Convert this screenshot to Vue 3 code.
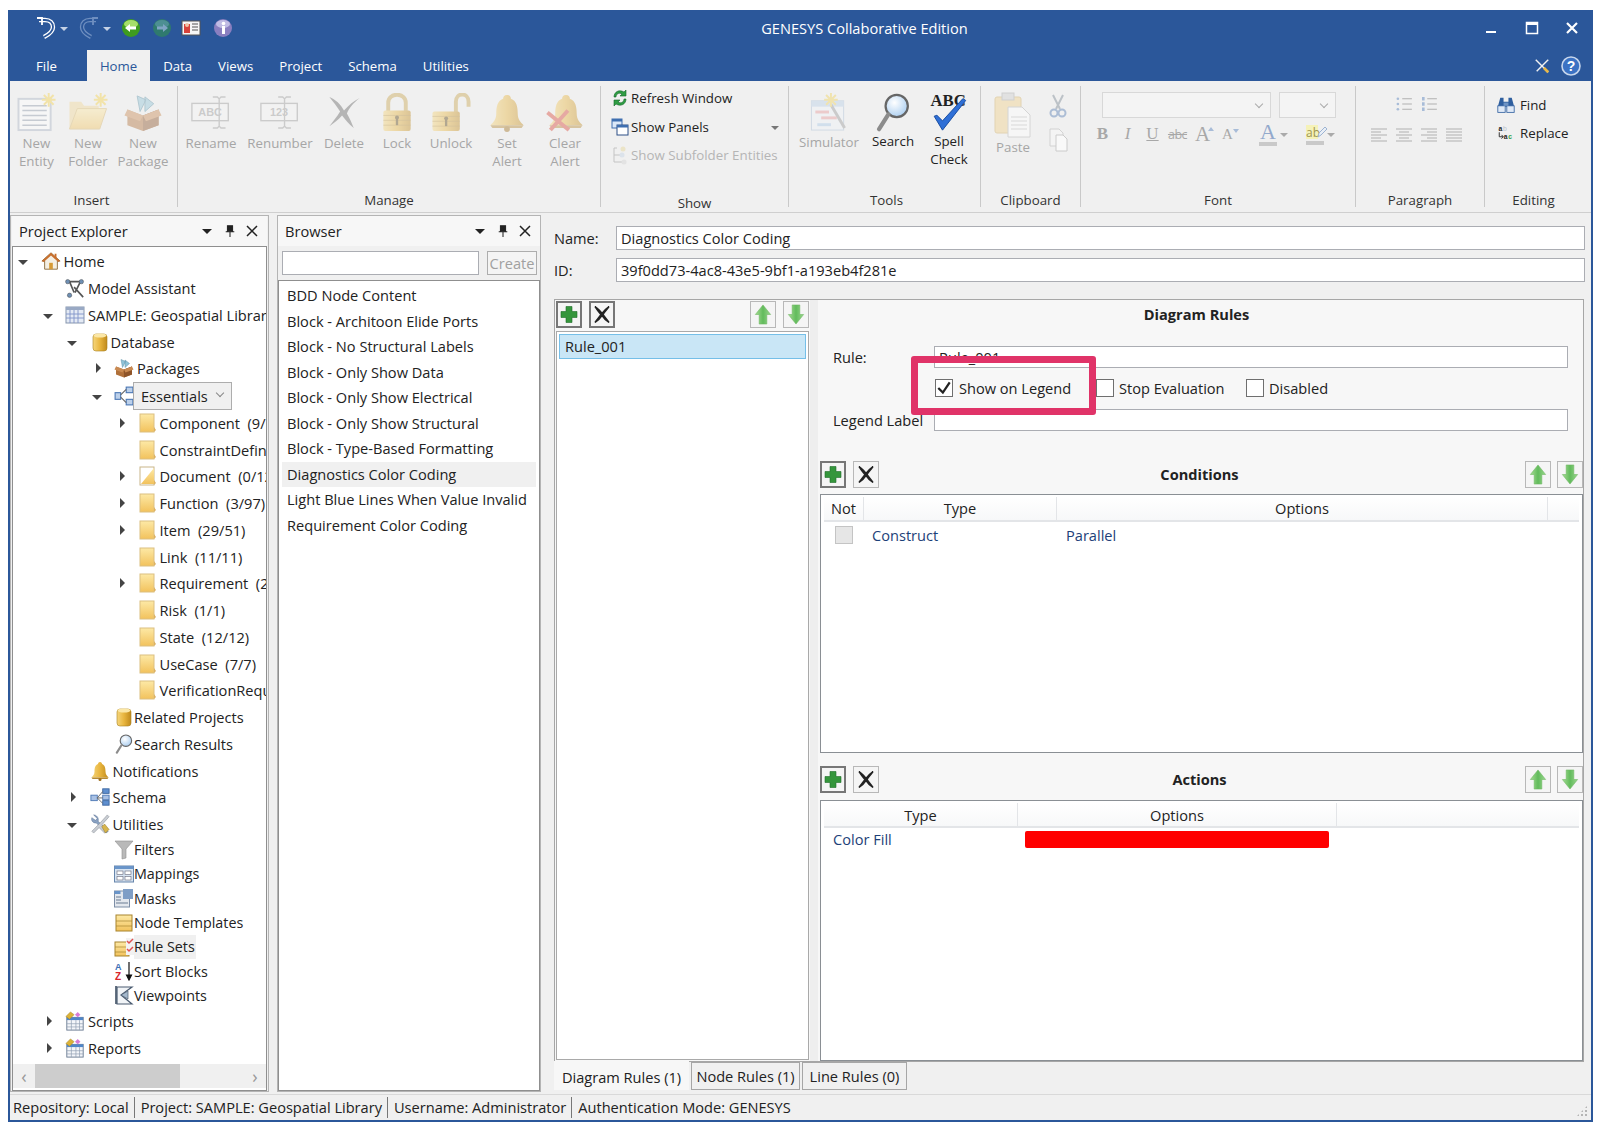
<script setup>
const tabs = ["File", "Home", "Data", "Views", "Project", "Schema", "Utilities"];

const insertBtns = [
  { icon: "newentity", lines: ["New", "Entity"], w: 53 },
  { icon: "newfolder", lines: ["New", "Folder"], w: 50 },
  { icon: "package", lines: ["New", "Package"], w: 60 },
];
const manageBtns = [
  { icon: "rename", lines: ["Rename"], w: 56 },
  { icon: "renumber", lines: ["Renumber"], w: 82 },
  { icon: "delete", lines: ["Delete"], w: 46 },
  { icon: "lock", lines: ["Lock"], w: 60 },
  { icon: "unlock", lines: ["Unlock"], w: 48 },
  { icon: "bell", lines: ["Set", "Alert"], w: 64 },
  { icon: "clearalert", lines: ["Clear", "Alert"], w: 52 },
];
const toolBtns = [
  { icon: "simulator", lines: ["Simulator"], w: 72, off: true },
  { icon: "search", lines: ["Search"], w: 56 },
  { icon: "spell", lines: ["Spell", "Check"], w: 56 },
];

const tree = [
  { d: 0, a: "open", i: "home", t: "Home" },
  { d: 1, i: "assistant", t: "Model Assistant" },
  { d: 1, a: "open", i: "table", t: "SAMPLE: Geospatial Library" },
  { d: 2, a: "open", i: "db", t: "Database", m: true },
  { d: 3, a: "closed", i: "package", t: "Packages" },
  { d: 3, a: "open", i: "hier", t: "Essentials", box: true },
  { d: 4, a: "closed", i: "folder", t: "Component  (9/14)", f: true },
  { d: 4, i: "folder", t: "ConstraintDefinition", f: true },
  { d: 4, a: "closed", i: "folderhalf", t: "Document  (0/12)", f: true },
  { d: 4, a: "closed", i: "folder", t: "Function  (3/97)", f: true },
  { d: 4, a: "closed", i: "folder", t: "Item  (29/51)", f: true },
  { d: 4, i: "folder", t: "Link  (11/11)", f: true },
  { d: 4, a: "closed", i: "folder", t: "Requirement  (24/24)", f: true },
  { d: 4, i: "folder", t: "Risk  (1/1)", f: true },
  { d: 4, i: "folder", t: "State  (12/12)", f: true },
  { d: 4, i: "folder", t: "UseCase  (7/7)", f: true },
  { d: 4, i: "folder", t: "VerificationRequirement", f: true },
  { d: 3, i: "db", t: "Related Projects", tight: true },
  { d: 3, i: "search", t: "Search Results", tight: true },
  { d: 2, i: "bell", t: "Notifications" },
  { d: 2, a: "closed", i: "schema", t: "Schema" },
  { d: 2, a: "open", i: "tools", t: "Utilities" },
  { d: 3, i: "filter", t: "Filters", tight: true, s: true },
  { d: 3, i: "mappings", t: "Mappings", tight: true, s: true },
  { d: 3, i: "masks", t: "Masks", tight: true, s: true },
  { d: 3, i: "nodetpl", t: "Node Templates", tight: true, s: true },
  { d: 3, i: "rulesets", t: "Rule Sets", tight: true, s: true, hl: true },
  { d: 3, i: "sort", t: "Sort Blocks", tight: true, s: true },
  { d: 3, i: "viewpoints", t: "Viewpoints", tight: true, s: true },
  { d: 1, a: "closed", i: "scripts", t: "Scripts" },
  { d: 1, a: "closed", i: "scripts", t: "Reports" },
];

const browserItems = [
  "BDD Node Content",
  "Block - Architoon Elide Ports",
  "Block - No Structural Labels",
  "Block - Only Show Data",
  "Block - Only Show Electrical",
  "Block - Only Show Structural",
  "Block - Type-Based Formatting",
  "Diagnostics Color Coding",
  "Light Blue Lines When Value Invalid",
  "Requirement Color Coding",
];
</script>

<template>
  <div class="app">
    <svg class="sprite" xmlns="http://www.w3.org/2000/svg">
      <defs>
        <linearGradient id="gFold" x1="0" y1="0" x2="0" y2="1"><stop offset="0" stop-color="#fde9a6" /><stop offset="1" stop-color="#f2c25c" /></linearGradient>
        <linearGradient id="gGold" x1="0" y1="0" x2="1" y2="0"><stop offset="0" stop-color="#f6d67c" /><stop offset=".5" stop-color="#e8b53e" /><stop offset="1" stop-color="#c08a1c" /></linearGradient>
        <linearGradient id="gGreen" x1="0" y1="0" x2="1" y2="0"><stop offset="0" stop-color="#a6dd93" /><stop offset=".5" stop-color="#62bb5c" /><stop offset="1" stop-color="#9ad78d" /></linearGradient>
        <radialGradient id="gLens" cx=".4" cy=".35" r=".7"><stop offset="0" stop-color="#ffffff" /><stop offset="1" stop-color="#a9cdf0" /></radialGradient>
      </defs>
      <symbol id="newentity" viewBox="0 0 40 40"><rect x="1" y="6" width="33" height="32" fill="#fff" stroke="#a9b4c4" stroke-width="2" /><path d="M5 13h25M5 18h25M5 23h25M5 28h25M5 33h25" stroke="#8d99ab" stroke-width="1.5" /><path d="M32 0v14M25 7h14M27 2l10 10M37 2L27 12" stroke="#f6d24a" stroke-width="2" /></symbol>
      <symbol id="newfolder" viewBox="0 0 40 40"><path d="M1 9h12l3 4h15v24H1z" fill="#f0d898" /><path d="M9 16h30l-7 21H1z" fill="url(#gFold)" stroke="#d8b668" /><path d="M33 0v14M26 7h14M28 2l10 10M38 2L28 12" stroke="#f6d24a" stroke-width="2" /></symbol>
      <symbol id="package" viewBox="0 0 40 40"><path d="M14 3l9 4-6 12zM22 4l9 7-9 8z" fill="#8fc3d8" stroke="#5f93a8" /><path d="M4 17l16 6 16-6v16l-16 6-16-6z" fill="#b0703a" /><path d="M20 23v16l16-6V17z" fill="#8e5429" /><path d="M4 17l-3 6 16 6 3-6zM36 17l3 6-16 6-3-6z" fill="#c98a52" /></symbol>
      <symbol id="rename" viewBox="0 0 44 40"><rect x="1" y="10" width="40" height="19" fill="#f7f7f7" stroke="#999" stroke-width="1.5" /><text x="21" y="24" text-anchor="middle" font-family="Liberation Sans, sans-serif" font-size="12" font-weight="700" fill="#999">ABC</text><path d="M24 3h5l2 2 2-2h5M31 5v30M24 37h5l2-2 2 2h5" stroke="#999" stroke-width="1.5" fill="none" /></symbol>
      <symbol id="renumber" viewBox="0 0 44 40"><rect x="1" y="10" width="40" height="19" fill="#f7f7f7" stroke="#999" stroke-width="1.5" /><text x="21" y="24" text-anchor="middle" font-family="Liberation Sans, sans-serif" font-size="12" font-weight="700" fill="#999">123</text><path d="M20 3h5l2 2 2-2h5M27 5v30M20 37h5l2-2 2 2h5" stroke="#999" stroke-width="1.5" fill="none" /></symbol>
      <symbol id="delete" viewBox="0 0 36 40"><path d="M3 4c6 2 12 8 15 14 5-6 10-10 16-13-6 5-11 10-13 16 3 5 5 10 7 15-5-4-9-9-12-13-4 5-9 8-13 11 4-5 8-10 11-15C11 14 7 9 3 4z" fill="#666" /></symbol>
      <symbol id="lock" viewBox="0 0 32 40"><path d="M7 19v-9c0-11 18-11 18 0v9" fill="none" stroke="#c9a64f" stroke-width="4" /><rect x="2" y="18" width="28" height="21" rx="2" fill="url(#gGold)" /><path d="M2 23h28M2 28h28M2 33h28" stroke="#a9802b" stroke-width=".6" /><path d="M16 24v9" stroke="#5c4310" stroke-width="2.4" /><circle cx="16" cy="25" r="2" fill="#5c4310" /></symbol>
      <symbol id="unlock" viewBox="0 0 40 40"><path d="M25 20V9c0-10 13-10 13 0v5" fill="none" stroke="#c9a64f" stroke-width="4" /><rect x="1" y="19" width="28" height="20" rx="2" fill="url(#gGold)" /><path d="M1 24h28M1 29h28M1 34h28" stroke="#a9802b" stroke-width=".6" /><path d="M15 25v9" stroke="#5c4310" stroke-width="2.4" /><circle cx="15" cy="26" r="2" fill="#5c4310" /></symbol>
      <symbol id="bell" viewBox="0 0 36 40"><path d="M18 2c3 0 4 2 4 4 6 2 7 9 7 15 0 6 3 9 6 12H1c3-3 6-6 6-12 0-6 1-13 7-15 0-2 1-4 4-4z" fill="url(#gGold)" /><path d="M1 33h34l-2 3H3z" fill="#b58a33" /><circle cx="18" cy="37" r="3" fill="#a0701e" /></symbol>
      <symbol id="clearalert" viewBox="0 0 38 40"><path d="M20 2c3 0 4 2 4 4 6 2 7 9 7 15 0 6 3 9 6 12H3c3-3 6-6 6-12 0-6 1-13 7-15 0-2 1-4 4-4z" fill="url(#gGold)" /><path d="M3 33h34l-2 3H5z" fill="#b58a33" /><path d="M1 20l22 18M22 18L4 38" stroke="#d94a3a" stroke-width="4" /></symbol>
      <symbol id="refresh" viewBox="0 0 18 20"><path d="M3 9C3 4 8 1 13 4l2-2v6H9l2-2C8 4 5 6 5 9z" fill="#2f9e44" stroke="#14672a" stroke-width=".6" /><path d="M15 11c0 5-5 8-10 5l-2 2v-6h6l-2 2c3 2 6 0 6-3z" fill="#2f9e44" stroke="#14672a" stroke-width=".6" /></symbol>
      <symbol id="panels" viewBox="0 0 18 18"><rect x="1" y="1" width="10" height="9" fill="#dbe8f8" stroke="#3f6fb0" /><rect x="1" y="1" width="10" height="2.5" fill="#3f6fb0" /><rect x="6" y="7" width="11" height="10" fill="#fff" stroke="#2c4f86" /><rect x="6" y="7" width="11" height="2.5" fill="#3f6fb0" /></symbol>
      <symbol id="subfolder" viewBox="0 0 18 20"><path d="M3 3h3M3 3v14M3 10h6M3 17h8" stroke="#9a9a9a" fill="none" /><circle cx="12" cy="4" r="2.5" fill="#e8d9a0" /><circle cx="11" cy="10" r="2.5" fill="#c9d8e8" /><circle cx="13" cy="17" r="2.5" fill="#d8d8d8" /></symbol>
      <symbol id="simulator" viewBox="0 0 40 40"><rect x="2" y="8" width="33" height="30" fill="#eef3f9" stroke="#a8bdd4" /><rect x="2" y="8" width="33" height="6" fill="#b9d0e8" /><rect x="6" y="18" width="14" height="3" fill="#e89a9a" /><rect x="12" y="24" width="16" height="3" fill="#e89a9a" /><rect x="8" y="31" width="14" height="3" fill="#a8c8e8" /><path d="M22 12l14 24" stroke="#999" stroke-width="3" /><path d="M22 0v14M15 7h14M17 2l10 10M27 2L17 12" stroke="#f2d256" stroke-width="2" /></symbol>
      <symbol id="search" viewBox="0 0 36 42"><circle cx="22" cy="14" r="12" fill="url(#gLens)" stroke="#666" stroke-width="2.4" /><path d="M13 23L3 39" stroke="#8c8c8c" stroke-width="4.5" stroke-linecap="round" /></symbol>
      <symbol id="spell" viewBox="0 0 42 42"><text x="20" y="14" text-anchor="middle" font-family="Liberation Serif, serif" font-size="18" font-weight="700" fill="#222">ABC</text><path d="M5 25l9 15L39 8l-3-2-22 24-6-6z" fill="#2f6fd6" stroke="#174b9e" stroke-width="1" /></symbol>
      <symbol id="paste" viewBox="0 0 38 46"><rect x="1" y="5" width="26" height="36" rx="2" fill="#f2d391" stroke="#d2b26b" /><rect x="8" y="1" width="12" height="7" fill="#cfcfcf" stroke="#aaa" /><path d="M14 15h14l8 8v22H14z" fill="#fff" stroke="#b4b4b4" /><path d="M17 25h16M17 29h16M17 33h16M17 37h16" stroke="#bdbdbd" /></symbol>
      <symbol id="cut" viewBox="0 0 20 24"><path d="M5 1l7 14M15 1L8 15" stroke="#9aa4ad" stroke-width="2" /><circle cx="6" cy="19" r="3.5" fill="none" stroke="#7f9cc4" stroke-width="2" /><circle cx="14" cy="19" r="3.5" fill="none" stroke="#7f9cc4" stroke-width="2" /></symbol>
      <symbol id="copy" viewBox="0 0 20 24"><path d="M2 1h9l4 4v13H2z" fill="#f7f7f7" stroke="#c0c0c0" /><path d="M8 7h7l4 4v12H8z" fill="#fff" stroke="#b4b4b4" /></symbol>
      <symbol id="find" viewBox="0 0 22 20"><path d="M4 1h4v5h6V1h4l3 11H1z" fill="#2f5f9f" /><rect x="1" y="11" width="9" height="8" fill="#dfe9f6" stroke="#2f5f9f" /><rect x="12" y="11" width="9" height="8" fill="#dfe9f6" stroke="#2f5f9f" /><rect x="8" y="7" width="6" height="4" fill="#6d93c4" /></symbol>
      <symbol id="replace" viewBox="0 0 24 22"><text x="2" y="8" font-family="Liberation Sans, sans-serif" font-size="9" font-weight="700" fill="#222">a</text><text x="8" y="8" font-family="Liberation Sans, sans-serif" font-size="9" fill="#b9c3cf">b</text><text x="9" y="19" font-family="Liberation Sans, sans-serif" font-size="9" font-weight="700" fill="#222">a</text><text x="15" y="19" font-family="Liberation Sans, sans-serif" font-size="9" font-weight="700" fill="#2f9e44">c</text><path d="M3 10v6h5M6 13.500l2.500 2.500L6 18.500" stroke="#222" stroke-width="1.200" fill="none" /></symbol>
      <symbol id="bul" viewBox="0 0 18 16"><circle cx="2" cy="2" r="1.500" fill="#a8bcd8" /><circle cx="2" cy="8" r="1.500" fill="#a8bcd8" /><circle cx="2" cy="14" r="1.500" fill="#a8bcd8" /><path d="M7 2h11M7 8h11M7 14h11" stroke="#b0b0b0" stroke-width="1.300" /></symbol>
      <symbol id="num" viewBox="0 0 18 16"><rect x="1" y="0" width="3" height="4" fill="#a8bcd8" /><rect x="1" y="6" width="3" height="4" fill="#a8bcd8" /><rect x="1" y="12" width="3" height="4" fill="#a8bcd8" /><path d="M7 2h11M7 8h11M7 14h11" stroke="#b0b0b0" stroke-width="1.300" /></symbol>
      <symbol id="alleft" viewBox="0 0 16 14"><path d="M0 1h16M0 4h10M0 7h16M0 10h10M0 13h16" stroke="#b0b0b0" /></symbol>
      <symbol id="alcenter" viewBox="0 0 16 14"><path d="M0 1h16M3 4h10M0 7h16M3 10h10M0 13h16" stroke="#b0b0b0" /></symbol>
      <symbol id="alright" viewBox="0 0 16 14"><path d="M0 1h16M6 4h10M0 7h16M6 10h10M0 13h16" stroke="#b0b0b0" /></symbol>
      <symbol id="aljust" viewBox="0 0 16 14"><path d="M0 1h16M0 4h16M0 7h16M0 10h16M0 13h16" stroke="#b0b0b0" /></symbol>
      <symbol id="home" viewBox="0 0 22 20"><path d="M11 1L1 10h3v9h14v-9h3z" fill="#f4efe3" stroke="#8a6a3a" /><path d="M11 1L1 10l2 1 8-7 8 7 2-1z" fill="#c96f2d" /><rect x="9" y="12" width="4" height="7" fill="#d69a35" /><rect x="15" y="2" width="2" height="5" fill="#c96f2d" /></symbol>
      <symbol id="assistant" viewBox="0 0 22 22"><path d="M3 4h15M5 4l5 12M17 4l-6 12M10 10l10 11" stroke="#555" stroke-width="1.800" /><circle cx="3" cy="4" r="2.400" fill="#6e8fb3" stroke="#444" stroke-width=".5" /><circle cx="18" cy="4" r="2.400" fill="#6e8fb3" stroke="#444" stroke-width=".5" /><circle cx="5" cy="19" r="2.400" fill="#6e8fb3" stroke="#444" stroke-width=".5" /></symbol>
      <symbol id="table" viewBox="0 0 20 18"><rect x="1" y="1" width="18" height="16" fill="#e4eaf4" stroke="#8695ad" /><rect x="1" y="1" width="18" height="3" fill="#99a9c4" /><path d="M5 4v13M9 4v13M13 4v13M1 8h18M1 12h18" stroke="#7f93c8" stroke-width=".9" /></symbol>
      <symbol id="db" viewBox="0 0 20 20"><rect x="3" y="2" width="14" height="17" rx="3" fill="url(#gGold)" stroke="#a87f1f" stroke-width=".6" /><ellipse cx="10" cy="3.500" rx="6.500" ry="2" fill="#fbe7a6" /></symbol>
      <symbol id="hier" viewBox="0 0 18 18"><rect x="1" y="6" width="5" height="6" fill="#bcd0ea" stroke="#4c78b5" /><rect x="11" y="1" width="6" height="5" fill="#bcd0ea" stroke="#4c78b5" /><rect x="11" y="12" width="6" height="5" fill="#bcd0ea" stroke="#4c78b5" /><path d="M6 8l5-5M6 10l5 5" stroke="#666" /></symbol>
      <symbol id="schema" viewBox="0 0 22 20"><rect x="1" y="8" width="7" height="6" fill="#a9c1e4" stroke="#4c78b5" /><rect x="14" y="1" width="7" height="5" fill="#5f8fcf" stroke="#3b66a0" /><rect x="14" y="8" width="7" height="5" fill="#a9c1e4" stroke="#4c78b5" /><rect x="14" y="14" width="7" height="5" fill="#5f8fcf" stroke="#3b66a0" /><path d="M8 11l6-7M8 11h6M8 11l6 6" stroke="#666" /></symbol>
      <symbol id="folder" viewBox="0 0 18 20"><rect x="1" y="1" width="14" height="18" fill="url(#gFold)" stroke="#dcbf80" /><path d="M15 14l2 3-2 2z" fill="#dcb264" /></symbol>
      <symbol id="folderhalf" viewBox="0 0 18 20"><rect x="1" y="1" width="14" height="18" fill="#fff" stroke="#c9b68a" /><path d="M15 2v16H2z" fill="url(#gFold)" /><path d="M15 14l2 3-2 2z" fill="#dcb264" /></symbol>
      <symbol id="tools" viewBox="0 0 22 22"><path d="M4 1l4 4-2 2-4-3c-1 3 1 6 5 6l11 11 2-2L9 8c1-4-2-7-5-7z" fill="#8aa2c2" stroke="#50698c" stroke-width=".5" /><path d="M19 1l2 2-8 9 6 6-3 3-6-6-6 6-2-2 9-9z" fill="#c9cdd3" stroke="#7a8088" stroke-width=".5" /><path d="M13 14l3-3 5 6-4 4z" fill="#d8b54c" stroke="#8a7020" stroke-width=".5" /></symbol>
      <symbol id="filter" viewBox="0 0 20 20"><path d="M1 1h18l-7 8v9l-4 1V9z" fill="#b9b9b9" stroke="#8f8f8f" stroke-width=".6" /></symbol>
      <symbol id="mappings" viewBox="0 0 20 20"><rect x=".5" y="2" width="19" height="16" fill="#d7e4f2" stroke="#6685ab" /><rect x=".5" y="2" width="19" height="3" fill="#6a95c9" /><rect x="3" y="7" width="6" height="3.500" fill="#fff" stroke="#667" stroke-width=".6" /><rect x="11" y="7" width="6" height="3.500" fill="#fff" stroke="#667" stroke-width=".6" /><rect x="3" y="12.500" width="6" height="3.500" fill="#fff" stroke="#667" stroke-width=".6" /><rect x="11" y="12.500" width="6" height="3.500" fill="#fff" stroke="#667" stroke-width=".6" /></symbol>
      <symbol id="masks" viewBox="0 0 20 20"><rect x=".5" y="3" width="15" height="16" fill="#e4e8ee" stroke="#7d8ea6" /><rect x=".5" y="3" width="6" height="3" fill="#6a95c9" /><rect x="9" y="1" width="10" height="10" fill="#7f9ec6" /><path d="M2 9h5M2 12h5M2 15h12" stroke="#6b7c93" /></symbol>
      <symbol id="nodetpl" viewBox="0 0 20 20"><rect x="2" y="2" width="16" height="16" fill="url(#gFold)" stroke="#a8842f" /><path d="M2 8h16M2 13h16" stroke="#a8842f" stroke-width=".7" /></symbol>
      <symbol id="rulesets" viewBox="0 0 20 20"><rect x="1" y="5" width="14" height="14" fill="url(#gFold)" stroke="#a8842f" /><path d="M1 10h14M1 15h14" stroke="#a8842f" stroke-width=".7" /><rect x="12" y="1" width="8" height="17" fill="#f2f2f2" /><path d="M13 4l2 2 4-4M13 12l2 2 4-4" stroke="#e05050" stroke-width="1.500" fill="none" /></symbol>
      <symbol id="sort" viewBox="0 0 20 20"><text x="1" y="9" font-family="Liberation Sans, sans-serif" font-size="9" font-weight="700" fill="#3b6fb5">A</text><text x="1" y="19" font-family="Liberation Sans, sans-serif" font-size="10" font-weight="700" fill="#d9252b">Z</text><path d="M15 1v16M12.500 14l2.500 5 2.500-5z" stroke="#111" stroke-width="1.200" fill="#111" /></symbol>
      <symbol id="viewpoints" viewBox="0 0 20 20"><path d="M2 1v18" stroke="#3f4f63" stroke-width="1.600" /><path d="M3 2h15L7 10l11 9H3z" fill="#f1f4f7" stroke="#4a5b70" stroke-width="1.200" /><path d="M7 10l7-4v8z" fill="#a4b8cc" stroke="#4a5b70" stroke-width=".7" /></symbol>
      <symbol id="scripts" viewBox="0 0 22 22"><rect x="2" y="7" width="18" height="14" fill="#f4f6fa" stroke="#67788f" /><rect x="2" y="7" width="18" height="3" fill="#4f86c9" /><path d="M7 10v11M12 10v11M16 10v11M2 14h18M2 17.500h18" stroke="#93a1b4" stroke-width=".8" /><path d="M1 6l5-5 4 3-5 5z" fill="#dcb338" stroke="#9a7a1c" stroke-width=".5" /><path d="M11 4l3-3 3 3-3 3z" fill="#d77ad6" /></symbol>
      <symbol id="plus" viewBox="0 0 20 20"><path d="M7 2h6v5h5v6h-5v5H7v-5H2V7h5z" fill="#35963c" stroke="#1f6d29" stroke-width=".6" /></symbol>
      <symbol id="cross" viewBox="0 0 20 20"><path d="M3 2c4 3 6 5 7 7 2-3 4-5 7-7-2 3-5 6-6 8 2 3 4 5 6 8-3-2-5-4-7-7-2 3-4 5-7 7 2-3 4-5 6-8-2-2-4-5-6-8z" fill="#222" stroke="#222" stroke-width="1.500" /></symbol>
      <symbol id="up" viewBox="0 0 20 22"><path d="M10 1l8 10h-4v10H6V11H2z" fill="url(#gGreen)" stroke="#6eb763" stroke-width=".6" /></symbol>
      <symbol id="down" viewBox="0 0 20 22"><path d="M10 21L2 11h4V1h8v10h4z" fill="url(#gGreen)" stroke="#6eb763" stroke-width=".6" /></symbol>
    </svg>

    <div class="win">
      <header class="titlebar">
        <div class="qat">
          <svg class="q undo" viewBox="0 0 22 24"><path d="M4 4h6c5 0 8 3 8 7 0 5-5 8-9 10" fill="none" stroke="#fff" stroke-width="4.400" /><path d="M4 4h6c5 0 8 3 8 7 0 5-5 8-9 10" fill="none" stroke="#2b579a" stroke-width="1.800" /><path d="M2 2h5v7" fill="none" stroke="#fff" stroke-width="1.800" /></svg>
          <i class="caret"></i>
          <svg class="q redo" viewBox="0 0 22 24"><path d="M18 4h-6C7 4 4 7 4 11c0 5 5 8 9 10" fill="none" stroke="#6f8fc0" stroke-width="4.400" /><path d="M18 4h-6C7 4 4 7 4 11c0 5 5 8 9 10" fill="none" stroke="#2b579a" stroke-width="1.800" /><path d="M20 2h-5v7" fill="none" stroke="#6f8fc0" stroke-width="1.800" /></svg>
          <i class="caret"></i>
          <svg class="q nav back" viewBox="0 0 20 20"><circle cx="10" cy="10" r="9" fill="#3e9c1e" /><ellipse cx="10" cy="6" rx="7" ry="4" fill="#a6de6a" /><path d="M4 10l5-4v2.500h6v3H9V14z" fill="#fff" /></svg>
          <svg class="q nav" viewBox="0 0 20 20"><circle cx="10" cy="10" r="9" fill="#2f7a6e" /><ellipse cx="10" cy="6" rx="7" ry="4" fill="#4d8f93" /><path d="M16 10l-5-4v2.500H5v3h6V14z" fill="#7fa4c4" /></svg>
          <svg class="q nav card" viewBox="0 0 20 16"><rect x="1" y="1" width="18" height="14" fill="#f6f6f6" stroke="#555" /><rect x="3" y="4" width="6" height="9" fill="#d8423a" /><circle cx="6" cy="5" r="2" fill="#f1c3a4" /><path d="M11 4h6M11 7h6M11 10h6" stroke="#555" /></svg>
          <svg class="q nav info" viewBox="0 0 20 20"><circle cx="10" cy="10" r="9" fill="#8a7fc0" /><ellipse cx="10" cy="6" rx="7" ry="4" fill="#c0bce4" /><rect x="9" y="8" width="3" height="8" fill="#fff" /><circle cx="10.500" cy="5.500" r="1.800" fill="#fff" /></svg>
        </div>
        <div class="apptitle">GENESYS Collaborative Edition</div>
        <div class="winctl">
          <svg viewBox="0 0 14 14"><rect x="1" y="10" width="10" height="2" fill="#fff" /></svg>
          <svg viewBox="0 0 14 14"><rect x="1.500" y="1.500" width="11" height="11" fill="none" stroke="#fff" stroke-width="1.500" /><rect x="1" y="1" width="12" height="3" fill="#fff" /></svg>
          <svg viewBox="0 0 14 14"><path d="M2 2l10 10M12 2L2 12" stroke="#fff" stroke-width="2.200" /></svg>
        </div>
      </header>

      <nav class="tabrow">
        <span v-for="t in tabs" :key="t" class="tab" :class="{ on: t === 'Home', file: t === 'File' }">{{ t }}</span>
        <div class="tabright">
          <svg class="wrench" viewBox="0 0 18 18"><path d="M2 2l14 14" stroke="#f2f2f2" stroke-width="1.600" /><path d="M16 2L3 15" stroke="#f2f2f2" stroke-width="1.600" /><path d="M11 11l5 5" stroke="#e9b949" stroke-width="3" /></svg>
          <svg viewBox="0 0 20 20"><circle cx="10" cy="10" r="9" fill="#3b72c4" stroke="#c7d6ec" stroke-width="1.600" /><text x="10" y="15" text-anchor="middle" font-family="Liberation Sans, sans-serif" font-size="14" font-weight="700" fill="#fff">?</text></svg>
        </div>
      </nav>

      <section class="ribbon">
        <div class="rgroup g-insert">
          <div class="rbody">
            <div v-for="b in insertBtns" :key="b.icon" class="lgbtn off" :style="{ width: b.w + 'px' }">
              <svg class="lgicon"><use :href="'#' + b.icon" /></svg>
              <span v-for="l in b.lines" :key="l">{{ l }}</span>
            </div>
          </div>
          <div class="rlabel">Insert</div>
        </div>
        <div class="rgroup g-manage">
          <div class="rbody">
            <div v-for="b in manageBtns" :key="b.icon" class="lgbtn off" :style="{ width: b.w + 'px' }">
              <svg class="lgicon"><use :href="'#' + b.icon" /></svg>
              <span v-for="l in b.lines" :key="l">{{ l }}</span>
            </div>
          </div>
          <div class="rlabel">Manage</div>
        </div>
        <div class="rgroup g-show">
          <div class="rstack">
            <div class="smbtn"><svg><use href="#refresh" /></svg>Refresh Window</div>
            <div class="smbtn"><svg><use href="#panels" /></svg>Show Panels<i class="tri"></i></div>
            <div class="smbtn off"><svg><use href="#subfolder" /></svg>Show Subfolder Entities</div>
          </div>
          <div class="rlabel low">Show</div>
        </div>
        <div class="rgroup g-tools">
          <div class="rbody">
            <div v-for="b in toolBtns" :key="b.icon" class="lgbtn" :class="{ off: b.off }" :style="{ width: b.w + 'px' }">
              <svg class="lgicon"><use :href="'#' + b.icon" /></svg>
              <span v-for="l in b.lines" :key="l">{{ l }}</span>
            </div>
          </div>
          <div class="rlabel">Tools</div>
        </div>
        <div class="rgroup g-clip">
          <div class="rbody clipbody">
            <div class="lgbtn off pastebtn">
              <svg class="pasteicon"><use href="#paste" /></svg>
              <span>Paste</span>
            </div>
            <div class="clipside off">
              <svg><use href="#cut" /></svg>
              <svg><use href="#copy" /></svg>
            </div>
          </div>
          <div class="rlabel">Clipboard</div>
        </div>
        <div class="rgroup g-font">
          <div class="fontbody">
            <div class="combos">
              <div class="combo wide"><i class="chev"></i></div>
              <div class="combo narrow"><i class="chev"></i></div>
            </div>
            <div class="fontrow">
              <b class="fb serif">B</b>
              <em class="fb serif">I</em>
              <u class="fb serif">U</u>
              <s class="fb abc">abc</s>
              <span class="fb big serif">A<i class="up-mark"></i></span>
              <span class="fb mid serif">A<i class="down-mark"></i></span>
              <span class="fb colA serif">A</span><i class="tri t2"></i>
              <span class="fb hlab">ab<svg class="pen" viewBox="0 0 10 12"><path d="M1 11l1-4 6-6 2 2-6 6z" fill="#e8eef6" stroke="#9db4d2" /></svg></span><i class="tri t2"></i>
            </div>
          </div>
          <div class="rlabel">Font</div>
        </div>
        <div class="rgroup g-para">
          <div class="parabody">
            <div class="pararow first">
              <svg class="pi"><use href="#bul" /></svg><svg class="pi"><use href="#num" /></svg>
            </div>
            <div class="pararow">
              <svg class="pi"><use href="#alleft" /></svg><svg class="pi"><use href="#alcenter" /></svg><svg class="pi"><use href="#alright" /></svg><svg class="pi"><use href="#aljust" /></svg>
            </div>
          </div>
          <div class="rlabel">Paragraph</div>
        </div>
        <div class="rgroup g-edit">
          <div class="editbody">
            <div class="smbtn"><svg><use href="#find" /></svg>Find</div>
            <div class="smbtn"><svg><use href="#replace" /></svg>Replace</div>
          </div>
          <div class="rlabel">Editing</div>
        </div>
      </section>

      <main class="content">
        <aside class="panel pe">
          <div class="phead">
            <span>Project Explorer</span>
            <div class="pctl">
              <i class="pdrop"></i>
              <svg viewBox="0 0 12 14"><path d="M3 1h6v7H3zM1 8h10M6 8v6M7 2v5" stroke="#222" stroke-width="1.200" fill="#222" /></svg>
              <svg viewBox="0 0 12 12"><path d="M1 1l10 10M11 1L1 11" stroke="#222" stroke-width="1.500" /></svg>
            </div>
          </div>
          <div class="treebox">
            <div class="treescroll">
              <div
                v-for="n in tree"
                :key="n.t"
                class="node"
                :class="{ small: n.s, ess: n.box }"
                :style="{ paddingLeft: 3 + n.d * 24.5 + 'px' }"
              >
                <span class="arrow"><i v-if="n.a" :class="n.a"></i></span>
                <svg class="nicon" :class="{ fold: n.f, tight: n.tight, near: n.m }"><use :href="'#' + n.i" /></svg>
                <span v-if="n.box" class="essbox">{{ n.t }}<i class="chev dark"></i></span>
                <span v-else class="ntext" :class="{ hl: n.hl }">{{ n.t }}</span>
              </div>
            </div>
            <div class="hscroll">
              <span class="sarrow">‹</span>
              <div class="thumb"></div>
              <span class="sarrow r">›</span>
            </div>
          </div>
        </aside>

        <aside class="panel br">
          <div class="phead">
            <span>Browser</span>
            <div class="pctl">
              <i class="pdrop"></i>
              <svg viewBox="0 0 12 14"><path d="M3 1h6v7H3zM1 8h10M6 8v6M7 2v5" stroke="#222" stroke-width="1.200" fill="#222" /></svg>
              <svg viewBox="0 0 12 12"><path d="M1 1l10 10M11 1L1 11" stroke="#222" stroke-width="1.500" /></svg>
            </div>
          </div>
          <div class="searchrow">
            <div class="input brinput"></div>
            <div class="createbtn">Create</div>
          </div>
          <div class="brlist">
            <div v-for="b in browserItems" :key="b" class="britem" :class="{ sel: b === 'Diagnostics Color Coding' }">{{ b }}</div>
          </div>
        </aside>

        <section class="main">
          <div class="formrow"><label>Name:</label><div class="input">Diagnostics Color Coding</div></div>
          <div class="formrow"><label>ID:</label><div class="input">39f0dd73-4ac8-43e5-9bf1-a193eb4f281e</div></div>

          <div class="rulepanel">
            <div class="leftpane">
              <div class="tools">
                <span class="tbtn dark"><svg><use href="#plus" /></svg></span>
                <span class="tbtn dark"><svg><use href="#cross" /></svg></span>
                <span class="spacer"></span>
                <span class="tbtn"><svg><use href="#up" /></svg></span>
                <span class="tbtn"><svg><use href="#down" /></svg></span>
              </div>
              <div class="rulelist"><div class="ruleitem">Rule_001</div></div>
            </div>
            <div class="splitter"></div>
            <div class="rightpane">
              <h3 class="ptitle">Diagram Rules</h3>
              <div class="fgrid">
                <label>Rule:</label>
                <div class="input tall">Rule_001</div>
              </div>
              <div class="checks">
                <span class="check c1"><i class="box"><svg viewBox="0 0 14 14"><path d="M2 7l4 4 6-9" fill="none" stroke="#222" stroke-width="2" /></svg></i>Show on Legend</span>
                <span class="check c2"><i class="box"></i>Stop Evaluation</span>
                <span class="check c3"><i class="box"></i>Disabled</span>
              </div>
              <div class="fgrid legend">
                <label>Legend Label</label>
                <div class="input tall"></div>
              </div>
              <div class="callout"></div>

              <div class="sect first">
                <div class="sectleft"><span class="tbtn dark"><svg><use href="#plus" /></svg></span><span class="tbtn"><svg><use href="#cross" /></svg></span></div>
                <strong>Conditions</strong>
                <div class="sectright"><span class="tbtn"><svg><use href="#up" /></svg></span><span class="tbtn"><svg><use href="#down" /></svg></span></div>
              </div>
              <div class="gridbox cond">
                <div class="ghead">
                  <span class="c-not">Not</span><span class="c-type">Type</span><span class="c-opt">Options</span><span class="c-rest"></span>
                </div>
                <div class="grow">
                  <span class="c-not"><i class="box grey"></i></span>
                  <span class="c-type link">Construct</span>
                  <span class="c-opt link">Parallel</span>
                </div>
              </div>

              <div class="sect">
                <div class="sectleft"><span class="tbtn dark"><svg><use href="#plus" /></svg></span><span class="tbtn"><svg><use href="#cross" /></svg></span></div>
                <strong>Actions</strong>
                <div class="sectright"><span class="tbtn"><svg><use href="#up" /></svg></span><span class="tbtn"><svg><use href="#down" /></svg></span></div>
              </div>
              <div class="gridbox act">
                <div class="ghead">
                  <span class="a-type">Type</span><span class="a-opt">Options</span><span class="c-rest"></span>
                </div>
                <div class="grow">
                  <span class="a-type link">Color Fill</span>
                  <span class="a-opt"><i class="redbar"></i></span>
                </div>
              </div>
            </div>
          </div>

          <div class="bottomtabs">
            <span class="btab on">Diagram Rules (1)</span>
            <span class="btab nr">Node Rules (1)</span>
            <span class="btab lr">Line Rules (0)</span>
          </div>
        </section>
      </main>

      <footer class="status">
        <span>Repository: Local</span>
        <span>Project: SAMPLE: Geospatial Library</span>
        <span>Username: Administrator</span>
        <span class="last">Authentication Mode: GENESYS</span>
        <i class="grip"></i>
      </footer>
    </div>
  </div>
</template>

<style scoped>
.app {
  width: 1602px;
  height: 1130px;
  box-sizing: border-box;
  padding: 10px 9px 8px 8px;
  background: #fff;
  font-family: "Open Sans", "Noto Sans", sans-serif;
  font-size: 14.6px;
  color: #222;
  overflow: hidden;
  position: relative;
}
.sprite {
  position: absolute;
  width: 0;
  height: 0;
}
.win {
  height: 100%;
  display: flex;
  flex-direction: column;
  border: 2px solid #2b579a;
  border-top: 0;
  box-sizing: border-box;
  background: #f0f0f0;
}

/* title */
.titlebar {
  height: 40px;
  flex: none;
  box-sizing: border-box;
  background: #2b579a;
  color: #fff;
  display: grid;
  grid-template-columns: 1fr auto 1fr;
  align-items: center;
  padding-bottom: 4px;
}
.qat {
  display: flex;
  align-items: center;
  padding-left: 25px;
}
.q {
  width: 20px;
  height: 20px;
}
.undo,
.redo {
  width: 22px;
  height: 24px;
}
.redo {
  margin-left: 10px;
}
.nav {
  margin-left: 11px;
}
.nav.back {
  margin-left: 10px;
}
.nav.card {
  margin-left: 9px;
}
.nav.info {
  margin-left: 12px;
}
.caret {
  width: 0;
  height: 0;
  margin-left: 3px;
  border: 4px solid transparent;
  border-top: 4px solid #c5d2e6;
  margin-top: 5px;
}
.apptitle {
  font-size: 14.6px;
  transform: translateX(64px);
}
.winctl {
  justify-self: end;
  display: flex;
  gap: 26px;
  padding-right: 12px;
}
.winctl svg {
  width: 14px;
  height: 14px;
}

/* tabs */
.tabrow {
  height: 31px;
  flex: none;
  background: #2b579a;
  display: flex;
  align-items: stretch;
  color: #fff;
}
.tab {
  padding: 0 13px;
  line-height: 32px;
  font-size: 13.2px;
}
.tab.file {
  margin-left: 13px;
  margin-right: 17px;
}
.tab.on {
  background: #f0f0f0;
  color: #2b579a;
}
.tabright {
  margin-left: auto;
  display: flex;
  align-items: center;
  gap: 11px;
  padding-right: 10px;
}
.tabright svg {
  width: 20px;
  height: 20px;
}
.tabright .wrench {
  width: 16px;
  height: 16px;
}

/* ribbon */
.ribbon {
  height: 132px;
  flex: none;
  box-sizing: border-box;
  display: flex;
  padding: 5px 0;
  background: #f0f0f0;
  border-bottom: 1px solid #cfcfcf;
  font-size: 13.3px;
}
.rgroup {
  display: flex;
  flex-direction: column;
  box-sizing: border-box;
  border-right: 1px solid #c9c9c9;
  flex: none;
}
.g-insert { width: 168px; padding-right: 4px; }
.g-manage { width: 423px; padding: 0 5px; }
.g-show { width: 188px; padding: 0 10px; }
.g-tools { width: 192px; padding-left: 4px; }
.g-clip { width: 100px; }
.g-font { width: 275px; }
.g-para { width: 129px; }
.g-edit { width: 103px; border-right: 0; padding-right: 6px; }
.rbody {
  display: flex;
  flex: 1;
}
.rlabel {
  text-align: center;
  height: 20px;
  line-height: 20px;
  margin-bottom: -3px;
  color: #333;
}
.rlabel.low {
  transform: translateY(3px);
}
.lgbtn {
  display: flex;
  flex-direction: column;
  align-items: center;
  padding-top: 7px;
  line-height: 18px;
  flex: none;
  color: #222;
}
.lgbtn.off {
  color: #a6a6a6;
}
.lgbtn.off .lgicon {
  opacity: 0.42;
}
.lgicon {
  width: 40px;
  height: 39px;
  margin-bottom: 2px;
}
.g-tools .lgicon {
  margin-bottom: 0;
}
.g-tools .lgbtn.off .lgicon {
  margin-bottom: 1px;
}
.rstack {
  flex: 1;
  display: flex;
  flex-direction: column;
  gap: 4.5px;
}
.smbtn {
  display: flex;
  align-items: center;
  height: 24px;
  white-space: nowrap;
  position: relative;
}
.smbtn svg {
  width: 18px;
  height: 20px;
  margin-right: 2px;
  flex: none;
}
.smbtn.off {
  color: #b5b5b5;
}
.smbtn.off svg {
  opacity: 0.5;
}
.tri {
  width: 0;
  height: 0;
  border: 4px solid transparent;
  border-top: 4px solid #777;
  position: absolute;
  left: 160px;
  top: 11px;
}
.clipbody {
  padding-left: 9px;
  gap: 9px;
}
.pastebtn {
  width: 46px;
  padding-top: 6px;
}
.pasteicon {
  width: 38px;
  height: 46px;
  margin-bottom: 0;
  opacity: 0.45;
}
.clipside {
  display: flex;
  flex-direction: column;
  gap: 10px;
  padding-top: 8px;
  padding-left: 2px;
  opacity: 0.6;
}
.clipside svg {
  width: 22px;
  height: 24px;
}
.fontbody {
  flex: 1;
  padding: 6px 0 0 21px;
}
.combos {
  display: flex;
  gap: 8px;
}
.combo {
  height: 26px;
  box-sizing: border-box;
  background: #f4f4f4;
  border: 1px solid #d8d8d8;
  position: relative;
}
.combo.wide { width: 169px; }
.combo.narrow { width: 57px; }
.chev {
  position: absolute;
  right: 8px;
  top: 8px;
  width: 5px;
  height: 5px;
  border-right: 1px solid #aaa;
  border-bottom: 1px solid #aaa;
  transform: rotate(45deg);
}
.fontrow {
  display: flex;
  align-items: center;
  margin: 4px 0 0 -12px;
  height: 24px;
  color: #a8a8a8;
  position: relative;
}
.fb {
  width: 25px;
  flex: none;
  text-align: center;
  font-size: 14px;
  position: relative;
  text-decoration-thickness: 1px;
}
.serif {
  font-family: "Liberation Serif", serif;
  font-size: 17px;
}
.abc {
  font-size: 12.5px;
  letter-spacing: -0.5px;
}
.big { font-size: 21px; }
.mid { font-size: 15px; }
.up-mark,
.down-mark {
  position: absolute;
  right: 1px;
  width: 0;
  height: 0;
  border: 3px solid transparent;
}
.up-mark {
  top: 2px;
  border-bottom: 4px solid #a8bcd8;
}
.down-mark {
  top: 3px;
  border-top: 4px solid #a8bcd8;
}
.colA {
  width: 18px;
  font-size: 22px;
  line-height: 20px;
  border-bottom: 4px solid #c9c9c9;
  margin-left: 19px;
  color: #93a9cc;
}
.hlab {
  width: 18px;
  font-size: 12px;
  line-height: 17px;
  color: #9f9650;
  background: linear-gradient(#f5f2b8, #f5f2b8) no-repeat 0 1px / 12px 14px;
  border-bottom: 4px solid #c9c9c9;
  margin-left: 18px;
  text-align: left;
}
.pen {
  position: absolute;
  right: -3px;
  top: 2px;
  width: 10px;
  height: 12px;
}
.fontrow .tri.t2 {
  position: static;
  margin: 5px 0 0 3px;
  border-top-color: #aaa;
}
.parabody {
  flex: 1;
  display: flex;
  flex-direction: column;
  align-items: center;
  padding-right: 8px;
}
.pararow {
  display: flex;
  gap: 9px;
  margin-top: 17px;
}
.pararow.first {
  margin-top: 11px;
}
.pi {
  width: 16px;
  height: 14px;
}
.editbody {
  flex: 1;
  padding: 7px 0 0 12px;
  display: flex;
  flex-direction: column;
  gap: 4px;
}
.editbody .smbtn svg {
  margin-right: 5px;
}

/* content */
.content {
  flex: 1;
  min-height: 0;
  display: flex;
  padding-top: 2px;
}
.panel {
  flex: none;
  display: flex;
  flex-direction: column;
  box-sizing: border-box;
  height: 877px;
  margin-left: 0;
}
.pe {
  width: 259px;
  border: 1px solid #b4b4b4;
  padding: 0 1px;
  margin-right: 8px;
}
.br {
  width: 264px;
  border: 1px solid #b4b4b4;
  margin-right: 6px;
}
.phead {
  height: 30px;
  flex: none;
  display: flex;
  align-items: center;
  justify-content: space-between;
  padding: 0 9px 0 7px;
  background: #f7f7f7;
}
.pctl {
  display: flex;
  align-items: center;
  gap: 10px;
}
.pctl svg {
  width: 12px;
  height: 12px;
}
.pdrop {
  width: 0;
  height: 0;
  border: 5px solid transparent;
  border-top: 5px solid #222;
  margin: 5px 2px 0 0;
}
.treebox {
  flex: 1;
  min-height: 0;
  display: flex;
  flex-direction: column;
  background: #fff;
  border: 1px solid #8f8f8f;
  overflow: hidden;
}
.treescroll {
  flex: 1;
  min-height: 0;
  overflow: hidden;
  padding-top: 1px;
}
.node {
  height: 26.75px;
  display: flex;
  align-items: center;
  white-space: pre;
  box-sizing: border-box;
}
.node.ess {
  height: 27.75px;
}
.node.small {
  height: 24.3px;
  font-size: 14.3px;
}
.arrow {
  width: 24.5px;
  flex: none;
  display: flex;
  padding-left: 2px;
  box-sizing: border-box;
}
.open {
  width: 0;
  height: 0;
  border-left: 5px solid transparent;
  border-right: 5px solid transparent;
  border-top: 5px solid #444;
  margin-top: 3px;
}
.closed {
  width: 0;
  height: 0;
  border-top: 5px solid transparent;
  border-bottom: 5px solid transparent;
  border-left: 5px solid #444;
  margin-left: 4px;
}
.nicon {
  width: 20px;
  height: 20px;
  flex: none;
  margin-right: 3px;
}
.nicon.fold {
  width: 18px;
  margin-right: 3px;
}
.nicon.tight {
  margin-right: 0;
}
.nicon.near {
  margin-right: 1px;
}
.ntext.hl {
  background: #f0f0f0;
  padding-right: 1px;
  line-height: 24px;
}
.essbox {
  width: 99px;
  height: 28px;
  line-height: 26px;
  box-sizing: border-box;
  border: 1px solid #adadad;
  background: #f0f0f0;
  padding-left: 7px;
  margin: 1px 0 0 -4px;
  position: relative;
}
.chev.dark {
  border-color: #888;
  top: 7px;
}
.hscroll {
  height: 24px;
  flex: none;
  display: flex;
  align-items: center;
  background: #f0f0f0;
  margin: 0 0 2px 0;
  color: #999;
}
.sarrow {
  width: 22px;
  text-align: center;
  font-size: 18px;
  line-height: 20px;
}
.sarrow.r {
  margin-left: auto;
}
.thumb {
  width: 145px;
  height: 100%;
  background: #cdcdcd;
}
.searchrow {
  display: flex;
  gap: 8px;
  padding: 5px 3px 5px 4px;
  height: 34px;
  box-sizing: border-box;
  flex: none;
}
.input {
  box-sizing: border-box;
  background: #fff;
  border: 1px solid #abadb3;
  flex: 1;
  min-width: 0;
  padding-left: 4px;
  line-height: 22px;
}
.createbtn {
  width: 50px;
  box-sizing: border-box;
  border: 1px solid #adadad;
  background: #f4f4f4;
  color: #a0a0a0;
  text-align: center;
  line-height: 22px;
}
.brlist {
  flex: 1;
  background: #fff;
  border: 1px solid #8f8f8f;
  padding: 2px 3px 0;
}
.britem {
  height: 25.5px;
  line-height: 25.5px;
  padding-left: 5px;
  white-space: nowrap;
}
.britem.sel {
  background: #f0f0f0;
}

/* main */
.main {
  flex: 1;
  min-width: 0;
  padding: 11px 6px 0 7px;
  box-sizing: border-box;
  display: flex;
  flex-direction: column;
}
.formrow {
  display: flex;
  align-items: center;
  height: 24px;
  margin-bottom: 8px;
}
.formrow label {
  width: 62px;
  flex: none;
}
.rulepanel {
  margin-top: 9px;
  height: 763px;
  flex: none;
  margin-right: 1px;
  box-sizing: border-box;
  border: 1px solid #a6a6a6;
  display: flex;
  background: #f7f7f7;
  position: relative;
}
.leftpane {
  width: 254px;
  flex: none;
  display: flex;
  flex-direction: column;
  padding: 0 1px 0 0;
  background: #f7f7f7;
}
.tools {
  display: flex;
  gap: 7px;
  height: 26px;
  align-items: center;
  padding: 1px 0 0 1px;
}
.spacer {
  flex: 1;
}
.tbtn {
  width: 26px;
  height: 27px;
  box-sizing: border-box;
  border: 1px solid #b8b8b8;
  background: #f5f5f5;
  display: flex;
  align-items: center;
  justify-content: center;
}
.tbtn.dark {
  border: 2px solid #777;
}
.tbtn svg {
  width: 20px;
  height: 21px;
}
.rulelist {
  flex: 1;
  margin: 4px 0 1px 1px;
  background: #fff;
  border: 1px solid #a9a9a9;
  padding: 2px;
}
.ruleitem {
  height: 25px;
  line-height: 23px;
  box-sizing: border-box;
  border: 1px solid #75bfe8;
  background: #c9e6f6;
  padding-left: 5px;
}
.splitter {
  width: 8px;
  flex: none;
  background: #eeeeee;
}
.rightpane {
  flex: 1;
  min-width: 0;
  position: relative;
  display: flex;
  flex-direction: column;
  padding-left: 2px;
}
.ptitle {
  margin: 0;
  height: 29px;
  line-height: 29px;
  font-size: 14.6px;
  font-weight: 700;
  text-align: center;
  flex: none;
  transform: translateX(-5px);
}
.fgrid {
  display: grid;
  grid-template-columns: 101px 1fr;
  align-items: center;
  margin: 17px 15px 0 13px;
}
.fgrid.legend {
  margin-top: 10px;
}
.input.tall {
  height: 22px;
  line-height: 20px;
  overflow: hidden;
}
.checks {
  display: flex;
  height: 22px;
  margin: 9px 0 0 115px;
  align-items: center;
}
.check {
  display: flex;
  align-items: center;
  gap: 5px;
  width: 161px;
  flex: none;
  white-space: nowrap;
}
.check.c1 { gap: 6px; }
.check.c2 { width: 150px; }
.box {
  width: 18px;
  height: 18px;
  flex: none;
  box-sizing: border-box;
  background: #fff;
  border: 1px solid #6f6f6f;
  display: inline-block;
}
.box svg {
  display: block;
  width: 100%;
  height: 100%;
}
.box.grey {
  background: #e6e6e6;
  border-color: #c4c4c4;
}
.callout {
  position: absolute;
  left: 93px;
  top: 56px;
  width: 185px;
  height: 59px;
  box-sizing: border-box;
  border: 7px solid #e03368;
  border-radius: 3px;
}
.sect {
  display: grid;
  grid-template-columns: 1fr auto 1fr;
  align-items: center;
  height: 27px;
  flex: none;
  margin-top: 13px;
}
.sect.first {
  margin-top: 30px;
}
.sect strong {
  font-weight: 700;
  transform: translate(-2px, -1px);
}
.sectleft,
.sectright {
  display: flex;
  gap: 7px;
}
.sectright {
  justify-content: flex-end;
  gap: 6px;
}
.gridbox {
  margin-top: 6px;
  box-sizing: border-box;
  background: #fff;
  border: 1px solid #8a8f94;
  padding: 2px 3px;
}
.gridbox.cond {
  height: 259px;
  flex: none;
}
.gridbox.cond .ghead {
  line-height: 22px;
}
.gridbox.act {
  flex: 1;
  min-height: 0;
  margin-top: 7px;
}
.ghead {
  display: flex;
  height: 25px;
  line-height: 24px;
  text-align: center;
  border-bottom: 2px solid #e3e5e8;
  background: linear-gradient(#fff, #f7f8f9);
  box-sizing: border-box;
}
.ghead span {
  border-right: 1px solid #e3e5e8;
  box-sizing: border-box;
  flex: none;
}
.ghead .c-rest {
  flex: 1;
  border-right: 0;
}
.c-not { width: 40px; }
.c-type { width: 193px; }
.c-opt { width: 491px; }
.a-type { width: 194px; }
.a-opt { width: 319px; }
.grow {
  display: flex;
  align-items: center;
  height: 26px;
}
.grow .c-not {
  padding-left: 11px;
  display: flex;
  align-items: center;
  width: 29px;
}
.grow .c-type {
  width: 202px;
  flex: none;
  padding-left: 8px;
  box-sizing: border-box;
}
.gridbox.act .grow {
  margin-top: -2px;
}
.grow .a-type {
  padding-left: 9px;
  box-sizing: border-box;
}
.grow .a-opt {
  display: flex;
  padding-left: 7px;
  box-sizing: border-box;
}
.link {
  color: #1d3f78;
}
.redbar {
  display: block;
  width: 304px;
  height: 17px;
  background: #ff0000;
  border-radius: 2px;
}
.bottomtabs {
  display: flex;
  height: 29px;
  margin-top: -1px;
  position: relative;
}
.btab {
  box-sizing: border-box;
  border: 1px solid #a6a6a6;
  background: #f0f0f0;
  line-height: 26px;
  height: 28px;
  margin-top: 1px;
  margin-left: 2px;
  text-align: center;
  width: 109px;
  white-space: nowrap;
}
.btab.on {
  width: 135px;
  margin-left: 0;
  margin-top: 0;
  height: 29px;
  background: #f7f7f7;
  border-top: 0;
  border-color: transparent;
  line-height: 32px;
}
.btab.lr {
  width: 105px;
}

/* status */
.status {
  height: 25px;
  flex: none;
  display: flex;
  align-items: center;
  background: #f0f0f0;
  border-top: 1px solid #d9d9d9;
  padding-left: 3px;
  position: relative;
}
.status span {
  padding-right: 5px;
  margin-right: 6px;
  border-right: 1px solid #777;
  line-height: 21px;
  white-space: nowrap;
}
.status span.last {
  border-right: 0;
}
.grip {
  position: absolute;
  right: 3px;
  bottom: 3px;
  width: 12px;
  height: 12px;
  background: radial-gradient(circle, #b5b5b5 1px, transparent 1.2px) 0 0 / 4px 4px;
  clip-path: polygon(100% 0, 100% 100%, 0 100%);
}
</style>

<style>
html, body {
  margin: 0;
  background: #fff;
}
</style>
